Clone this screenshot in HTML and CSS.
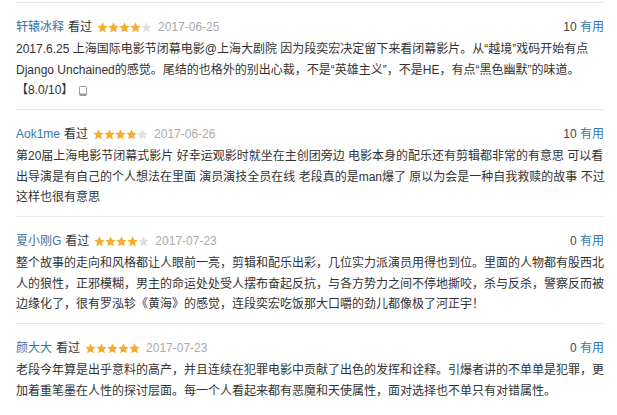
FILE: index.html
```html
<!DOCTYPE html>
<html lang="zh-CN">
<head>
<meta charset="utf-8">
<title>短评</title>
<link rel="stylesheet" href="styles.css">
</head>
<body>
<svg width="0" height="0" class="defs" aria-hidden="true">
  <defs>
    <polygon id="star" points="5.5,0.2 7.03,3.7 10.83,4.07 7.97,6.6 8.79,10.33 5.5,8.4 2.21,10.33 3.03,6.6 0.17,4.07 3.97,3.7"/>
  </defs>
</svg>
<div class="list">
  <div class="comment">
    <div class="head">
      <div class="info">
        <a class="user" href="#">轩辕冰释</a>
        <span class="seen">看过</span>
        <svg class="stars" width="55" height="11" viewBox="0 0 55 11"><use href="#star" x="0" class="on"/><use href="#star" x="11" class="on"/><use href="#star" x="22" class="on"/><use href="#star" x="33" class="on"/><use href="#star" x="44" class="off"/></svg>
        <span class="date">2017-06-25</span>
      </div>
      <div class="votes"><span class="count">10</span> <a class="useful" href="#">有用</a></div>
    </div>
    <p class="text">2017.6.25 上海国际电影节闭幕电影@上海大剧院 因为段奕宏决定留下来看闭幕影片。从“越境”戏码开始有点 Django Unchained的感觉。尾结的也格外的别出心裁，不是“英雄主义”，不是HE，有点“黑色幽默”的味道。【8.0/10】 <svg class="phone" width="8" height="10" viewBox="0 0 8 10"><rect x="0.5" y="0.5" width="7" height="9" rx="0.8" fill="#fff" stroke="#9a9a9a"/><rect x="1" y="7.5" width="6" height="2" fill="#9a9a9a"/></svg></p>
  </div>

  <div class="comment">
    <div class="head">
      <div class="info">
        <a class="user" href="#">Aok1me</a>
        <span class="seen">看过</span>
        <svg class="stars" width="55" height="11" viewBox="0 0 55 11"><use href="#star" x="0" class="on"/><use href="#star" x="11" class="on"/><use href="#star" x="22" class="on"/><use href="#star" x="33" class="on"/><use href="#star" x="44" class="off"/></svg>
        <span class="date">2017-06-26</span>
      </div>
      <div class="votes"><span class="count">10</span> <a class="useful" href="#">有用</a></div>
    </div>
    <p class="text">第20届上海电影节闭幕式影片 好幸运观影时就坐在主创团旁边 电影本身的配乐还有剪辑都非常的有意思 可以看出导演是有自己的个人想法在里面 演员演技全员在线 老段真的是man爆了 原以为会是一种自我救赎的故事 不过这样也很有意思</p>
  </div>

  <div class="comment">
    <div class="head">
      <div class="info">
        <a class="user" href="#">夏小刚G</a>
        <span class="seen">看过</span>
        <svg class="stars" width="55" height="11" viewBox="0 0 55 11"><use href="#star" x="0" class="on"/><use href="#star" x="11" class="on"/><use href="#star" x="22" class="on"/><use href="#star" x="33" class="on"/><use href="#star" x="44" class="off"/></svg>
        <span class="date">2017-07-23</span>
      </div>
      <div class="votes"><span class="count">0</span> <a class="useful" href="#">有用</a></div>
    </div>
    <p class="text">整个故事的走向和风格都让人眼前一亮，剪辑和配乐出彩，几位实力派演员用得也到位。里面的人物都有股西北人的狼性，正邪模糊，男主的命运处处受人摆布奋起反抗，与各方势力之间不停地撕咬，杀与反杀，警察反而被边缘化了，很有罗泓轸《黄海》的感觉，连段奕宏吃饭那大口嚼的劲儿都像极了河正宇！</p>
  </div>

  <div class="comment">
    <div class="head">
      <div class="info">
        <a class="user" href="#">颜大大</a>
        <span class="seen">看过</span>
        <svg class="stars" width="55" height="11" viewBox="0 0 55 11"><use href="#star" x="0" class="on"/><use href="#star" x="11" class="on"/><use href="#star" x="22" class="on"/><use href="#star" x="33" class="on"/><use href="#star" x="44" class="on"/></svg>
        <span class="date">2017-07-23</span>
      </div>
      <div class="votes"><span class="count">0</span> <a class="useful" href="#">有用</a></div>
    </div>
    <p class="text">老段今年算是出乎意料的高产，并且连续在犯罪电影中贡献了出色的发挥和诠释。引爆者讲的不单单是犯罪，更加着重笔墨在人性的探讨层面。每一个人看起来都有恶魔和天使属性，面对选择也不单只有对错属性。</p>
  </div>
</div>
</body>
</html>
```

FILE: styles.css
```css
html, body {
  margin: 0;
  padding: 0;
  background: #fff;
}

body {
  font-family: "Liberation Sans", "Noto Sans CJK SC", sans-serif;
  font-size: 12px;
  color: #333;
}

.defs {
  position: absolute;
}

.list {
  width: 588px;
  margin: 2px 0 0 16px;
}

.comment {
  border-top: 1px solid #e6e6e6;
  padding: 15px 0 8.5px;
}

.head {
  display: flex;
  justify-content: space-between;
  align-items: center;
  height: 18px;
  line-height: 18px;
}

.info {
  display: flex;
  align-items: center;
}

.user {
  color: #3377aa;
  text-decoration: none;
}

.seen {
  margin-left: 4px;
  color: #333;
}

.stars {
  margin-left: 5px;
  display: block;
}

.stars .on {
  fill: #f7ab2f;
}

.stars .off {
  fill: #e0e0e0;
}

.date {
  margin-left: 6px;
  color: #aaa;
}

.votes {
  color: #444;
}

.useful {
  color: #3377aa;
  text-decoration: none;
}

.text {
  margin: 3px -3px 0 0;
  line-height: 20.5px;
  color: #333;
}

.phone {
  vertical-align: -2px;
  margin-left: 2px;
}
```
